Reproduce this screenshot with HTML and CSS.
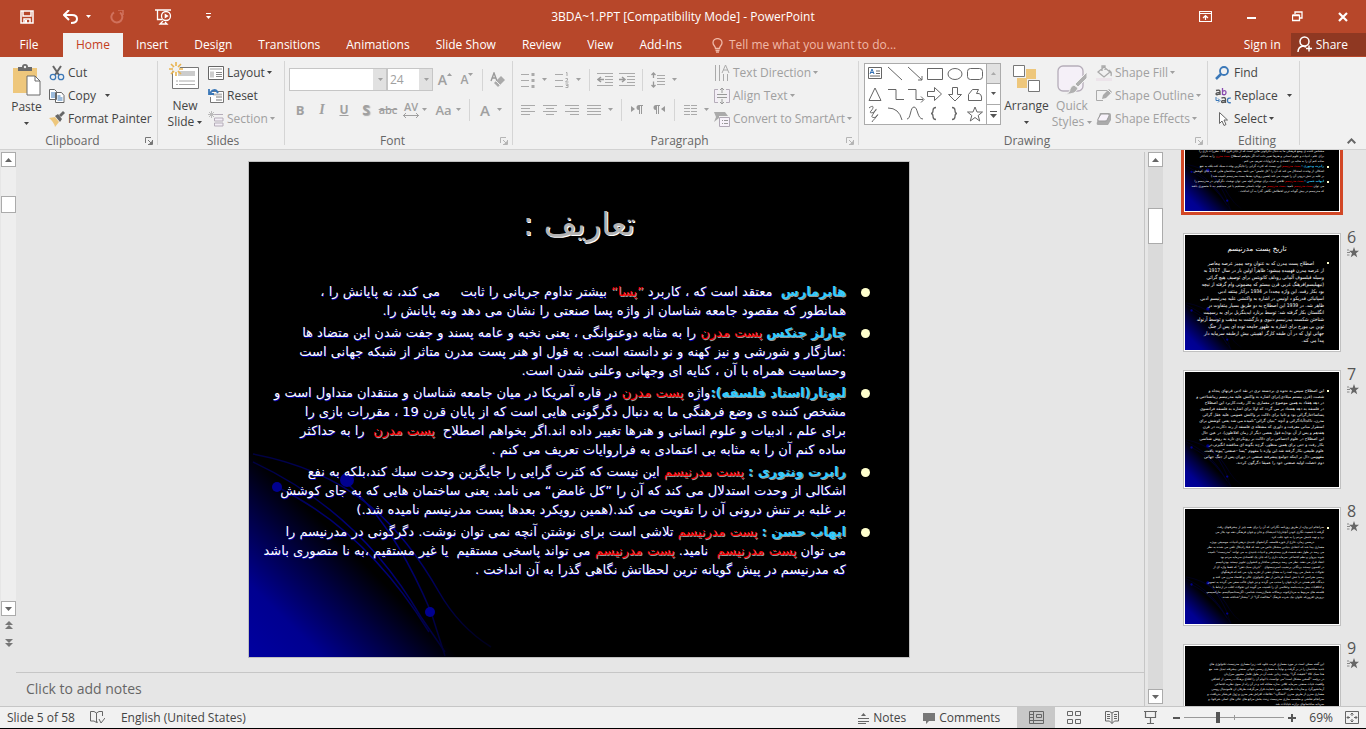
FILE: index.html
```html
<!DOCTYPE html>
<html lang="en">
<head>
<meta charset="utf-8">
<title>3BDA~1.PPT [Compatibility Mode] - PowerPoint</title>
<link rel="stylesheet" href="styles.css">
</head>
<body>
<svg class="defs" aria-hidden="true">
  <defs>
    <linearGradient id="glow" gradientUnits="userSpaceOnUse" x1="0" y1="495" x2="104" y2="390">
      <stop offset="0" stop-color="#0000a0"/><stop offset=".35" stop-color="#000090"/><stop offset=".7" stop-color="#000045"/><stop offset="1" stop-color="#000"/>
    </linearGradient>
    <linearGradient id="trail" gradientUnits="userSpaceOnUse" x1="0" y1="300" x2="240" y2="495">
      <stop offset="0" stop-color="#000040"/><stop offset=".5" stop-color="#000088"/><stop offset="1" stop-color="#000018"/>
    </linearGradient>
    <symbol id="slide-bg" viewBox="0 0 660 495" preserveAspectRatio="none">
      <rect width="660" height="495" fill="#000"/>
      <rect y="230" width="300" height="265" fill="url(#glow)"/>
      <g fill="none" stroke="url(#trail)" stroke-width="1.5">
        <path d="M4 292C100 310 150 360 190 430Q210 465 242 485"/>
        <path d="M4 300C90 340 140 400 172 455L196 490"/>
        <path d="M28 325C90 355 140 405 180 470"/>
        <path d="M99 322C140 360 165 410 182 450L196 494"/>
      </g>
      <g fill="#000090"><circle cx="28" cy="325" r="5"/><circle cx="98" cy="318" r="7"/><circle cx="181" cy="450" r="5"/></g>
    </symbol>
    <symbol id="caret" viewBox="0 0 5 3"><path d="M0 0h5L2.500 3z" fill="currentColor"/></symbol>
    <symbol id="launch" viewBox="0 0 8 8"><path d="M.5 6V.5H6M3 3l3 3M7.500 3v4.500H3" fill="none" stroke="currentColor"/><path d="M7 4v3H4z" fill="currentColor"/></symbol>
    <symbol id="star" viewBox="0 0 12 11"><path d="M7 0l1.300 3.700H12L9 6.200l1.200 4L7 8 3.800 10.200 5 6.200 2 3.700h3.700z" fill="#666"/><path d="M0 3h2M0 5.500h3M0 8h2.500" stroke="#888"/></symbol>
    <symbol id="up" viewBox="0 0 7 4"><path d="M0 4h7L3.500 0z" fill="currentColor"/></symbol>
    <symbol id="down" viewBox="0 0 7 4"><path d="M0 0h7L3.500 4z" fill="currentColor"/></symbol>
  </defs>
</svg>

<div class="app">
<header class="titlebar">
  <div class="quick">
    <button class="qb save" aria-label="Save"><svg width="14" height="14" viewBox="0 0 14 14"><path d="M1 1h12v12H1zM3 1v5h8V1M4 13V9h6v4" fill="none" stroke="#fff" stroke-width="1.500"/><path d="M5 10h2v3H5z" fill="#fff"/></svg></button>
    <button class="qb undo" aria-label="Undo"><svg width="15" height="14" viewBox="0 0 15 14"><path d="M2 5h7q5 0 5 4t-6 4" fill="none" stroke="#fff" stroke-width="2"/><path d="M6 0L1 5l5 5" fill="none" stroke="#fff" stroke-width="2"/></svg><svg class="c"><use href="#caret"/></svg></button>
    <button class="qb redo" aria-label="Repeat"><svg width="14" height="14" viewBox="0 0 14 14"><path d="M10 2.500A5.500 5.500 0 1 1 4 2.300" fill="none" stroke="#d0715c" stroke-width="2"/><path d="M8 0h5v5" fill="none" stroke="#d0715c" stroke-width="1.500"/></svg></button>
    <button class="qb show" aria-label="Start from beginning"><svg width="17" height="16" viewBox="0 0 17 16"><path d="M0 1h16M2.500 1v9.500H7M8 12l-3 3h7l-2-2" fill="none" stroke="#fff" stroke-width="1.300"/><circle cx="11" cy="7" r="4.500" fill="#b7472a" stroke="#fff" stroke-width="1.300"/><path d="M9.700 4.500v5l4-2.500z" fill="#fff"/></svg></button>
    <button class="qb more" aria-label="Customize Quick Access Toolbar"><svg width="7" height="7" viewBox="0 0 7 7"><path d="M1 .5h5" stroke="#fff"/><path d="M1 3h5L3.500 6z" fill="#fff"/></svg></button>
  </div>
  <h1 class="doc">3BDA~1.PPT [Compatibility Mode] - PowerPoint</h1>
  <div class="win">
    <button aria-label="Ribbon Display Options"><svg width="13" height="11" viewBox="0 0 13 11"><path d="M.5.500h12v10H.500zM.500 2.500h12M6.500 9V4.500M4 7l2.500-2.500L9 7" fill="none" stroke="#fff" stroke-width="1.200"/></svg></button>
    <button aria-label="Minimize"><svg width="10" height="11" viewBox="0 0 10 11"><path d="M0 7h9" stroke="#fff" stroke-width="2"/></svg></button>
    <button aria-label="Restore Down"><svg width="11" height="11" viewBox="0 0 11 11"><path d="M.5 4.500h7v5h-7zM.500 4h7M3 3V1h7v6H8" fill="none" stroke="#fff" stroke-width="1.300"/></svg></button>
    <button aria-label="Close"><svg width="10" height="10" viewBox="0 0 10 10"><path d="M1 1l8 8M9 1L1 9" stroke="#fff" stroke-width="2.200"/></svg></button>
  </div>
</header>

<nav class="tabs">
  <button class="tab file">File</button><button class="tab on">Home</button><button class="tab">Insert</button><button class="tab">Design</button><button class="tab">Transitions</button><button class="tab">Animations</button><button class="tab">Slide Show</button><button class="tab">Review</button><button class="tab">View</button><button class="tab">Add-Ins</button>
  <button class="tell"><svg width="11" height="15" viewBox="0 0 11 15"><path d="M3.500 10.500C3.500 8 1 7.500 1 4.800a4.500 4.200 0 0 1 9 0c0 2.700-2.500 3.200-2.500 5.700zM3.500 12.500h4M4 14.200h3" fill="none" stroke="#f0b9a8" stroke-width="1.300"/></svg>Tell me what you want to do...</button>
  <button class="sign">Sign in</button>
  <button class="share"><svg width="16" height="17" viewBox="0 0 16 17"><circle cx="7.500" cy="5.500" r="4.500" fill="none" stroke="#fff" stroke-width="1.500"/><path d="M1 16q0-5 5-6l3 1M12 9.500v6M9 12.500h6" fill="none" stroke="#fff" stroke-width="1.500"/></svg>Share</button>
</nav>

<section class="ribbon">
  <div class="group clip">
    <div class="tools">
      <button class="big paste"><svg width="30" height="32" viewBox="0 0 30 32"><path d="M1 4h24v25H1z" fill="#eec77c"/><path d="M6 7V3h4a3 3 0 0 1 6 0h4v4z" fill="#6a6a6a"/><circle cx="13" cy="3" r="1.200" fill="#f1f1f1"/><path d="M15 12h8l5 5v14H15z" fill="#fff" stroke="#6a6a6a"/><path d="M23 12v5h5" fill="none" stroke="#6a6a6a"/></svg><span>Paste</span><svg class="c"><use href="#caret"/></svg></button>
      <div class="rows">
        <button class="row"><svg width="16" height="16" viewBox="0 0 16 16"><path d="M4 1l6 9M12 1L6 10" stroke="#666" stroke-width="2"/><circle cx="4" cy="12" r="2.700" fill="none" stroke="#3b78b8" stroke-width="1.300"/><circle cx="12" cy="12" r="2.700" fill="none" stroke="#3b78b8" stroke-width="1.300"/></svg>Cut</button>
        <button class="row copy"><svg width="16" height="16" viewBox="0 0 16 16"><path d="M.5 1.500h5l2 2v8h-7zM6.500 4.500h6l2.500 3v7H6.500z" fill="#fff" stroke="#666"/><path d="M2 5h4M2 7h4M2 9h4M8.500 8h3M8.500 10h5M8.500 12h5" stroke="#3b78b8"/></svg>Copy<svg class="c"><use href="#caret"/></svg></button>
        <button class="row"><svg width="16" height="16" viewBox="0 0 16 16"><path d="M0 7l6-1 4 5-4 5q-1-5-6-9z" fill="#eec77c"/><path d="M6 5l3-2 4 5-2 3zM10 4l4-4 2 2-4 4z" fill="#666"/></svg>Format Painter</button>
      </div>
    </div>
    <div class="name">Clipboard</div><button class="launch" aria-label="Clipboard options"><svg><use href="#launch"/></svg></button>
  </div>

  <div class="group slides">
    <div class="tools">
      <button class="big new"><svg width="32" height="30" viewBox="0 0 32 30"><path d="M3.500 5.500h26v21h-26z" fill="#fff" stroke="#777"/><path d="M9 9h17v5H9z" fill="#ccc"/><path d="M7 19h19M7 22.500h19" stroke="#aaa" stroke-dasharray="2 1 30"/><circle cx="7" cy="7" r="4" fill="#f1f1f1"/><path d="M7 0v4M7 10v4M0 7h4M10 7h4M2 2l3 3M9 9l3 3M12 2L9 5M5 9l-3 3" stroke="#e9b44f" stroke-width="1.600"/></svg><span>New</span><span>Slide <svg class="c"><use href="#caret"/></svg></span></button>
      <div class="rows">
        <button class="row"><svg width="16" height="16" viewBox="0 0 16 16"><path d="M.5 1.500h15v13H.500z" fill="#fff" stroke="#666"/><path d="M2 3h12v2H2zM2 6.500h4v6H2z" fill="#ccc"/><path d="M8 7.500h6M8 9.500h6M8 11.500h6" stroke="#888"/></svg>Layout<svg class="c"><use href="#caret"/></svg></button>
        <button class="row"><svg width="16" height="16" viewBox="0 0 16 16"><path d="M4 3.500h11.500v11H2.500V9" fill="#fff" stroke="#777"/><path d="M5 6.500h9M8 9h6M8 12h6" stroke="#bbb" stroke-width="2"/><path d="M10 5Q7-1 2 5M1 1v5h5" fill="none" stroke="#3b78b8" stroke-width="1.800"/></svg>Reset</button>
        <button class="row off"><svg width="16" height="16" viewBox="0 0 16 16"><path d="M6 3.500h9M6.500 7h8.500v3H6.500zM6.500 12h8.500v3H6.500z" fill="#f3eef6" stroke="#b5adb9"/><path d="M3.500 0v7M0 3.500h7M1 1l5 5M6 1L1 6" stroke="#bbb"/></svg>Section<svg class="c"><use href="#caret"/></svg></button>
      </div>
    </div>
    <div class="name">Slides</div>
  </div>

  <div class="group font">
    <div class="tools stack off">
      <div class="line">
        <label class="combo face"><select aria-label="Font"><option></option></select><svg class="c"><use href="#caret"/></svg></label><label class="combo size"><select aria-label="Font size"><option>24</option></select><svg class="c"><use href="#caret"/></svg></label>
        <button class="t grow" aria-label="Increase font size">A<svg class="c"><use href="#up"/></svg></button>
        <button class="t shrink" aria-label="Decrease font size">A<svg class="c"><use href="#down"/></svg></button>
        <i class="sep"></i>
        <button class="t" aria-label="Clear formatting"><svg width="16" height="16" viewBox="0 0 16 16"><path d="M1 9L4 1l3 8M2 6h4" fill="none" stroke="#999" stroke-width="1.400"/><path d="M4 11l7-7 4 4-7 7z" fill="#aaa"/><path d="M6 9l4 4" stroke="#f1f1f1"/></svg></button>
      </div>
      <div class="line">
        <button class="t b">B</button><button class="t i">I</button><button class="t u">U</button><button class="t s">S</button><button class="t strike">abc</button>
        <button class="t w av" aria-label="Character spacing"><span>AV<svg width="16" height="5" viewBox="0 0 16 5"><path d="M0 2.500h16M3 0L.5 2.500 3 5M13 0l2.500 2.500L13 5" fill="none" stroke="currentColor"/></svg></span><svg class="c"><use href="#caret"/></svg></button>
        <button class="t w aa">Aa<svg class="c"><use href="#caret"/></svg></button>
        <i class="sep"></i>
        <button class="t w col">A<svg class="c"><use href="#caret"/></svg></button>
      </div>
    </div>
    <div class="name">Font</div><button class="launch off" aria-label="Font options"><svg><use href="#launch"/></svg></button>
  </div>

  <div class="group para">
    <div class="tools off">
      <div class="stack">
        <div class="line">
          <button class="t w" aria-label="Bullets"><svg width="14" height="16" viewBox="0 0 14 16"><path d="M0 2.500h8M0 8.500h8M0 14.500h8" stroke="#aaa"/><path d="M10.500 1h3v3h-3zM10.500 7h3v3h-3zM10.500 13h3v3h-3z" fill="#aaa"/></svg><svg class="c"><use href="#caret"/></svg></button>
          <button class="t w" aria-label="Numbering"><svg width="14" height="16" viewBox="0 0 14 16"><path d="M0 2.500h8M0 8.500h8M0 14.500h8M11 .5h1V4M10.500 6.500h2v1.500l-2 2h3M10.500 12h2.500v3.500h-2.500M11 13.500h2" fill="none" stroke="#aaa"/></svg><svg class="c"><use href="#caret"/></svg></button>
          <i class="sep"></i>
          <button class="t" aria-label="Decrease list level"><svg width="16" height="13" viewBox="0 0 16 13"><path d="M0 .5h16M8 3.500h8M8 6.500h8M8 9.500h8M0 12.500h16" stroke="#aaa"/><path d="M7 6.500H1M4 4L1 6.500 4 9" fill="none" stroke="#999" stroke-width="1.500"/></svg></button>
          <button class="t" aria-label="Increase list level"><svg width="16" height="13" viewBox="0 0 16 13"><path d="M0 .5h16M8 3.500h8M8 6.500h8M8 9.500h8M0 12.500h16" stroke="#aaa"/><path d="M0 6.500h6M3 4l3 2.500L3 9" fill="none" stroke="#999" stroke-width="1.500"/></svg></button>
          <i class="sep"></i>
          <button class="t w" aria-label="Line spacing"><svg width="14" height="16" viewBox="0 0 14 16"><path d="M6 3.500h8M6 6.500h8M6 9.500h8M6 12.500h8" stroke="#aaa"/><path d="M2.500 1v5M.5 3l2-2 2 2M2.500 9.500v5M.5 13l2 2 2-2" fill="none" stroke="#999" stroke-width="1.300"/></svg><svg class="c"><use href="#caret"/></svg></button>
        </div>
        <div class="line">
          <button class="t" aria-label="Align left"><svg width="14" height="10" viewBox="0 0 14 10"><path d="M0 .5h14M0 3.500h9M0 6.500h14M0 9.500h9" stroke="#aaa"/></svg></button>
          <button class="t" aria-label="Center"><svg width="14" height="10" viewBox="0 0 14 10"><path d="M0 .5h14M3 3.500h8M0 6.500h14M3 9.500h8" stroke="#aaa"/></svg></button>
          <button class="t" aria-label="Align right"><svg width="14" height="10" viewBox="0 0 14 10"><path d="M0 .5h14M5 3.500h9M0 6.500h14M5 9.500h9" stroke="#aaa"/></svg></button>
          <button class="t w" aria-label="Justify"><svg width="14" height="10" viewBox="0 0 14 10"><path d="M0 .5h14M0 3.500h14M0 6.500h14M0 9.500h14" stroke="#aaa"/></svg><svg class="c"><use href="#caret"/></svg></button>
          <i class="sep"></i>
          <button class="t" aria-label="Left-to-right"><svg width="12" height="9" viewBox="0 0 12 9"><path d="M0 1v6l4-3zM8 0h4v1H8v4a2.500 2.500 0 0 1 0-5z" fill="#999"/><path d="M8.500 0v9M10.500 0v9" stroke="#999"/></svg></button>
          <button class="t" aria-label="Right-to-left"><svg width="12" height="9" viewBox="0 0 12 9"><path d="M12 1v6L8 4zM3 0h4v1H3v4a2.500 2.500 0 0 1 0-5z" fill="#999"/><path d="M3.500 0v9M5.500 0v9" stroke="#999"/></svg></button>
          <i class="sep"></i>
          <button class="t w" aria-label="Columns"><svg width="13" height="10" viewBox="0 0 13 10"><path d="M0 .5h6M7 .5h6M0 3.500h6M7 3.500h6M0 6.500h6M7 6.500h6M0 9.500h6M7 9.500h6" stroke="#aaa"/></svg><svg class="c"><use href="#caret"/></svg></button>
        </div>
      </div>
      <div class="rows">
        <button class="row"><svg width="16" height="16" viewBox="0 0 16 16"><path d="M1.500 0v16M5.500 0v16M9.500 9v7M13.500 9v7M8 8l3.500-8L15 8M9 5h5" fill="none" stroke="#aaa"/></svg>Text Direction<svg class="c"><use href="#caret"/></svg></button>
        <button class="row"><svg width="16" height="16" viewBox="0 0 16 16"><path d="M4 1.500H.500v13H4M12 1.500h3.500v13H12" fill="#f3eef6" stroke="#b5adb9"/><path d="M3 6.500h10M3 9.500h10M8 0v5M6 2l2-2 2 2M8 11v5M6 14l2 2 2-2" fill="none" stroke="#999"/></svg>Align Text<svg class="c"><use href="#caret"/></svg></button>
        <button class="row"><svg width="16" height="16" viewBox="0 0 16 16"><path d="M0 1h11l3 4H5v2l-5 4 2-5z" fill="#aaa"/><path d="M5.500 6.500h10v9h-10z" fill="#f7f2fa" stroke="#b0a8b5"/><path d="M8 9.500h1M10 9.500h4M8 12.500h1M10 12.500h4" stroke="#999"/></svg>Convert to SmartArt<svg class="c"><use href="#caret"/></svg></button>
      </div>
    </div>
    <div class="name">Paragraph</div><button class="launch off" aria-label="Paragraph options"><svg><use href="#launch"/></svg></button>
  </div>

  <div class="group draw">
    <div class="tools">
      <div class="gallery">
        <svg class="shapes" width="121" height="60" viewBox="0 0 121 60" role="img" aria-label="Shapes"><g fill="none" stroke="#666"><path d="M3.500 3.500h13v11h-13zM11 7h4M11 9.500h4M5 12h10"/><path d="M5 10l2-5 2 5M5.500 8.500h3" stroke="#2f6fb5"/><path d="M23 3l14 13M43 3l14 13M57 12v4h-4M62.500 4.500h15v11h-15z"/><ellipse cx="90" cy="10" rx="7" ry="5.500"/><rect x="102.500" y="4.500" width="15" height="11" rx="3"/><path d="M10 24l6 12.500H4zM23 25.500h8v10h8M43 25.500h8v10h7M56 32.500l3 3-3 3M62.500 27.500h7v-4l7 6.500-7 6.500v-4h-7zM87.500 23.500h5v7h4L90 37l-6.500-6.500h4zM103.500 36.500v-6l4-5h6l-2 4q6-1 5 7zM4 44c5-4 5 0 2 3s4 2 5-1-3 4-4 6 4 2 5 0 1-2-1 1-3 3-4 5M23 44q11 0 14 12M42 55c4 0 3-12 7-12s3 12 9 12"/><path d="M71 43.500q-3 0-3 3t-2 3q2 0 2 3t3 3M87 43.500q3 0 3 3t2 3q-2 0-2 3t-3 3" stroke-width="1.300"/><path d="M110 43l2 5h5.500l-4.300 3.500 1.500 5.500-4.700-3.500-4.700 3.500 1.500-5.500L102.500 48h5.500z"/></g></svg>
        <div class="gscroll"><button class="dis" aria-label="Scroll up"><svg class="c"><use href="#up"/></svg></button><button aria-label="Scroll down"><svg class="c"><use href="#caret"/></svg></button><button aria-label="More shapes"><svg width="7" height="7" viewBox="0 0 7 7"><path d="M0 .5h7" stroke="#555"/><path d="M0 3h7L3.500 7z" fill="#555"/></svg></button></div>
      </div>
      <button class="big arr"><svg width="28" height="28" viewBox="0 0 28 28"><path d="M13 4h10v10H13zM4 13h10v10H4z" fill="#eec77c"/><path d="M.5.500h11v11H.500zM15.500 15.500h11v11h-11z" fill="#fff" stroke="#777"/></svg><span>Arrange</span><svg class="c"><use href="#caret"/></svg></button>
      <button class="big qs off"><svg width="30" height="30" viewBox="0 0 30 30"><rect x="1" y="1" width="25" height="25" rx="5" fill="#f5f0f8" stroke="#b5adb9" stroke-width="1.300"/><path d="M30 7v6l-9 9-3-3zM17 20l4 3q-2 7-13 6 5-1 5-5 1-3 4-4z" fill="#b0b0b0" stroke="#f1f1f1"/></svg><span>Quick</span><span>Styles <svg class="c"><use href="#caret"/></svg></span></button>
      <div class="rows off">
        <button class="row"><svg width="16" height="16" viewBox="0 0 16 16"><path d="M2 7l6-5 6 5-6 5zM6 6V1h3v4M13 5q3 2 2 6" fill="none" stroke="#aaa" stroke-width="1.300"/><path d="M0 13h16v3H0z" fill="#ece4ea"/></svg>Shape Fill<svg class="c"><use href="#caret"/></svg></button>
        <button class="row"><svg width="16" height="16" viewBox="0 0 16 16"><path d="M11 2.500H.500v10H7" fill="none" stroke="#aaa"/><path d="M6 11l1-4 6-6 3 3-6 6z" fill="#aaa"/><path d="M12 2l3 3" stroke="#f1f1f1"/></svg>Shape Outline<svg class="c"><use href="#caret"/></svg></button>
        <button class="row"><svg width="16" height="16" viewBox="0 0 16 16"><path d="M4 2h9q2 0 2 2v5l-3 5H2q-2 0-1-3z" fill="#aaa"/><path d="M5 3h7q2 0 1 2l-2 4q0 1-2 1H3q-2 0-1-2z" fill="#f7f2fa" stroke="#999"/></svg>Shape Effects<svg class="c"><use href="#caret"/></svg></button>
      </div>
    </div>
    <div class="name">Drawing</div><button class="launch off" aria-label="Drawing options"><svg><use href="#launch"/></svg></button>
  </div>

  <div class="group edit">
    <div class="tools"><div class="rows">
      <button class="row"><svg width="16" height="16" viewBox="0 0 16 16"><circle cx="9" cy="6" r="4" fill="none" stroke="#3b78b8" stroke-width="1.800"/><path d="M6 9l-5 5" stroke="#3b78b8" stroke-width="2.500"/></svg>Find</button>
      <button class="row repl"><svg width="16" height="16" viewBox="0 0 16 16" fill="none" stroke-width="1.300"><path d="M1 2.500q4-1 4 1V7M5 4.500q-4 0-4 1.500t4 0" stroke="#555"/><path d="M7.500 0v7M7.500 3.500Q11 1.500 11 4.500T7.500 6.500" stroke="#8a4bb0"/><path d="M1 9v3.500h3M3 10.500l2 2-2 2" stroke="#3b78b8" stroke-width="1"/><path d="M6.500 10q4-1 4 1v4M10.500 12.300q-4 0-4 1.500t4 0" stroke="#555"/><path d="M15.800 10.200q-3.300-.8-3.300 2.200t3.300 2.200" stroke="#3b78b8"/></svg>Replace<svg class="c"><use href="#caret"/></svg></button>
      <button class="row"><svg width="16" height="16" viewBox="0 0 16 16"><path d="M4.500 1.500v11l2.500-2.500 2 4.500 2-1-2-4.500h3.500z" fill="#fff" stroke="#666"/></svg>Select<svg class="c"><use href="#caret"/></svg></button>
    </div></div>
    <div class="name">Editing</div>
  </div>
  <button class="collapse" aria-label="Collapse the Ribbon"><svg width="9" height="6" viewBox="0 0 9 6"><path d="M.7 5.200l3.800-3.800 3.800 3.800" fill="none" stroke="#666" stroke-width="2"/></svg></button>
</section>

<main class="work">
  <div class="vscroll left">
    <button class="sb" aria-label="Up"><svg><use href="#up"/></svg></button>
    <div class="track t1"><span class="thumb"></span></div>
    <button class="sb" aria-label="Down"><svg><use href="#down"/></svg></button>
    <button class="jump" aria-label="Previous slide"><svg width="8" height="8" viewBox="0 0 8 8"><path d="M0 4l4-4 4 4zM0 8l4-4 4 4z" fill="#777"/></svg></button>
    <button class="jump" aria-label="Next slide"><svg width="8" height="8" viewBox="0 0 8 8"><path d="M0 0l4 4 4-4zM0 4l4 4 4-4z" fill="#777"/></svg></button>
  </div>
  <div class="editor">
    <div class="stage">
      <article class="slide" lang="fa" dir="rtl">
        <svg class="bg" aria-hidden="true"><use href="#slide-bg"/></svg>
        <h2>تعاریف :</h2>
        <ul>
          <li><span><b>هابرمارس</b>&nbsp; معتقد است که ، کاربرد <em>”پسا“</em> بیشتر تداوم جریانی را ثابت &nbsp; &nbsp; می کند، نه پایانش را ،</span><span>همانطور که مقصود جامعه شناسان از واژه پسا صنعتی را نشان می دهد ونه پایانش را.</span></li>
          <li><span><b>چارلز جنکس</b> <em>پست مدرن</em> را به مثابه دوعنوانگی ، یعنی نخبه و عامه پسند و جفت شدن این متضاد ها</span><span>:سازگار و شورشی و نیز کهنه و نو دانسته است. به قول او هنر پست مدرن متاثر از شبکه جهانی است</span><span>وحساسیت همراه با آن ، کنایه ای وجهانی وعلنی شدن است.</span></li>
          <li><span><b>لیوتار(استاد فلسفه):</b>واژه <em>پست مدرن</em> در قاره آمریکا در میان جامعه شناسان و منتقدان متداول است و</span><span>مشخص کننده ی وضع فرهنگی ما به دنبال دگرگونی هایی است که از پایان قرن 19 ، مقررات بازی را</span><span>برای علم ، ادبیات و علوم انسانی و هنرها تغییر داده اند.اگر بخواهم اصطلاح&nbsp; <em>پست مدرن</em>&nbsp; را به حداکثر</span><span>ساده کنم آن را به مثابه بی اعتمادی به فراروایات تعریف می کنم .</span></li>
          <li><span><b>رابرت ونتوری :</b> <em>پست مدرنیسم</em> این نیست که کثرت گرایی را جایگزین وحدت سبك کند،بلکه به نفع</span><span>اشکالی از وحدت استدلال می کند که آن را ”کل غامض“ می نامد. یعنی ساختمان هایی که به جای کوشش</span><span>بر غلبه بر تنش درونی آن را تقویت می کند.(همین رویکرد بعدها پست مدرنیسم نامیده شد.)</span></li>
          <li><span><b>ایهاب حسن :</b> <em>پست مدرنیسم</em> تلاشی است برای نوشتن آنچه نمی توان نوشت. دگرگونی در مدرنیسم را</span><span>می توان <em>پست مدرنیسم</em>&nbsp; نامید. <em>پست مدرنیسم</em> می تواند پاسخی مستقیم&nbsp; یا غیر مستقیم ،به نا متصوری باشد</span><span>که مدرنیسم در پیش گویانه ترین لحظاتش نگاهی گذرا به آن انداخت .</span></li>
        </ul>
      </article>
    </div>
    <div class="notes" role="textbox" aria-label="Notes">Click to add notes</div>
  </div>
  <div class="vscroll right">
    <button class="sb" aria-label="Up"><svg><use href="#up"/></svg></button>
    <div class="track t2"><span class="thumb"></span></div>
    <button class="sb" aria-label="Down"><svg><use href="#down"/></svg></button>
  </div>
  <aside class="thumbs">
    <div class="item cut"><div class="mini sel m5" lang="fa" dir="rtl"><svg class="bg" aria-hidden="true"><use href="#slide-bg"/></svg>
      <p><span class="dot"></span><span><b>لیوتار(استاد فلسفه):</b>واژه <em>پست مدرن</em> در قاره آمریکا در میان جامعه شناسان و منتقدان متداول است و</span><span>مشخص کننده ی وضع فرهنگی ما به دنبال دگرگونی هایی است که از پایان قرن 19 ، مقررات بازی را</span><span>برای علم ، ادبیات و علوم انسانی و هنرها تغییر داده اند.اگر بخواهم اصطلاح <em>پست مدرن</em> را به حداکثر</span><span>ساده کنم آن را به مثابه بی اعتمادی به فراروایات تعریف می کنم .</span></p>
      <p><span class="dot"></span><span><b>رابرت ونتوری :</b> <em>پست مدرنیسم</em> این نیست که کثرت گرایی را جایگزین وحدت سبك کند،بلکه به نفع</span><span>اشکالی از وحدت استدلال می کند که آن را ”کل غامض“ می نامد. یعنی ساختمان هایی که به جای کوشش</span><span>بر غلبه بر تنش درونی آن را تقویت می کند.(همین رویکرد بعدها پست مدرنیسم نامیده شد.)</span></p>
      <p><span class="dot"></span><span><b>ایهاب حسن :</b> <em>پست مدرنیسم</em> تلاشی است برای نوشتن آنچه نمی توان نوشت. دگرگونی در مدرنیسم را</span><span>می توان <em>پست مدرنیسم</em> نامید. <em>پست مدرنیسم</em> می تواند پاسخی مستقیم یا غیر مستقیم ،به نا متصوری باشد</span><span>که مدرنیسم در پیش گویانه ترین لحظاتش نگاهی گذرا به آن انداخت .</span></p>
    </div></div>
    <div class="item"><div class="mini m6" lang="fa" dir="rtl"><svg class="bg" aria-hidden="true"><use href="#slide-bg"/></svg>
      <h3>تاریخ پست مدرنیسم</h3>
      <p><span class="dot"></span><span class="in">اصطلاح پست مدرن که به عنوان وجه ممیز عرصه معاصر</span><span>از عرصه مدرن فهمیده میشود؛ ظاهراً اولین بار در سال 1917 به</span><span>وسیله فیلسوف آلمانی رودلف کانویتس برای توصیف هیچ گرائی</span><span>(نیهیلیسم)فرهنگ غربی قرن بیستم که مضمونی وام گرفته از نیچه</span><span>بود بکار رفت. این واژه مجددا در 1934 درآثار منتقد ادبی</span><span>اسپانیائی فدریکو د اونیس در اشاره به واکنشی علیه مدرنیسم ادبی</span><span>ظاهر شد. در 1939 این اصطلاح به دو طریق بسیار متفاوت در</span><span>انگلستان بکار گرفته شد: توسط برنارد ایدینگزبل برای به رسمیت</span><span>شناختن شکست مدرنیسم دنیوی و بازگشت به مذهب و توسط آرنولد</span><span>توین بی مورخ برای اشاره به ظهور جامعه توده ای پس از جنگ</span><span>جهانی اول که در آن طبقه کارگر اهمیتی بیش ازطبقه سرمایه دار</span><span class="end">پیدا می کند.</span></p>
    </div><div class="no">6<svg><use href="#star"/></svg></div></div>
    <div class="item"><div class="mini m7" lang="fa" dir="rtl"><svg class="bg" aria-hidden="true"><use href="#slide-bg"/></svg>
      <p><span class="dot"></span><span>این اصطلاح سپس به نحوه ی برجسته تری در نقد ادبی قرنهای پنجاه و</span><span>شصت (قرن بیستم میلادی)برای اشاره به واکنش علیه مدرنیسم زیباشناختی و</span><span>در دهه هفتاد به همین موضوع در معماری به کار رفت.کاربرد این اصطلاح</span><span>در فلسفه به دهه هشتاد بر می گردد که اولا برای اشاره به فلسفه فرانسوی</span><span>پساساختارگرائی بود و ثانیا برای دلالت بر واکنش عمومی علیه عقل گرائی</span><span>مدرن، ناکجاآبادگرائی و آنچه ”بنیان گرائی“نامیده می شد یعنی کوشش برای</span><span>استقرار مبانی معرفت و داوری که مشغله ی فلسفه از رنه دکارت در قرن</span><span>هفدهم و پس از آن بود(به قول بعضی دیگر از زمان افلاطون). در عین حال</span><span>این اصطلاح در علوم اجتماعی برای دلالت بر رویکردی تازه به روش شناسی</span><span>بکار رفت و حتی برای همین منظور، گرچه بگونه ای مناقشه انگیزتر،در</span><span>علوم طبیعی بکار گرفته شد.این واژه با مفهوم ”پسا –صنعتی“پیوند یافت،</span><span>مفهومی دال بر اینکه جوامع پیشرفته صنعتی در دوران پس از جنگ جهانی</span><span>دوم خصلت اولیه صنعتی خود را عمیقا دگرگون کردند.</span></p>
    </div><div class="no">7<svg><use href="#star"/></svg></div></div>
    <div class="item"><div class="mini m8" lang="fa" dir="rtl"><svg class="bg" aria-hidden="true"><use href="#slide-bg"/></svg>
      <p><span class="dot"></span><span>سرانجام این واژه از طریق روزنامه نگارانی که آن را برای همه چیز از پیشرفتهای رقت</span><span>گرفته تا جمعیت نگاری کودن آنچنان(با اندیشناک و جان و جوان فرهنگی دهه نود بکار می</span><span>برد و تهیه جنبش مردم را به خود جلب کرد.</span><span class="in">درضمن زمان، خارج از حوزه فلسفه، گرانشهای جدیدی درهنر،ادبیات، موسیقی بویژه</span><span>معماری پیدا شد که انتقادی بنیادین مشکل خاص می شد که قبلا رادیکال تلقی می شدند.به نظر</span><span>می رسد در طول دهه شصت قرن بیستم،هنر و ادبیات جدیدی به می توانند ”مدرنیست“ نامیده</span><span>شوند پیروان و نظم اجتماعی سرمایه داری را که جان یک اقتصادی سرمایه مردم بود</span><span>انتقاد قرار می دهند. نظر می رسد پرسشی ساختار و کنشوارن تجویز نیستند بودزبانیسم</span><span>در افسون نیستند بردگانی برنشیب اسپردیستهای &nbsp; ”جریان سبک ذهن“ که فقط واژه ای از</span><span>تحولات به شمار می روند لغت را به معنای ذهنی از تجربه وارد می کند که فرهنگهای</span><span>رسمی هنراسی که با تنش اسناد فرنتاس از نظر تکنولوژی عالی و اقتصاد مدرن می کنند و</span><span>دیدگاه علم هستی در تازه جهان را مدنب می گردند و نیز جهان غالب سعی می گردند به تصویر</span><span>و اخلاقیات بیش پدیده‌پنامند وعکاسی آن را تلفنیده می گویند این تحولات اغلب در ارتباط با</span><span>فلسفه های مربوط به مردازکنونه پرسالانه شمال‌زیست شناسی، اگزیستانسیالیسم، مارکسیسم،</span><span>پرورش افزون‌که علوان نیک شرده فرهنگ ”مخالفت گرا“ از ”پیشتاز“شناخته شدند.</span></p>
    </div><div class="no">8<svg><use href="#star"/></svg></div></div>
    <div class="item last"><div class="mini m9" lang="fa" dir="rtl"><svg class="bg" aria-hidden="true"><use href="#slide-bg"/></svg>
      <p><span>این گفته ممکن است در مورد معماری غریب جلوه کند، زیرا معماری مدرنیست تکنولوژی های</span><span>جدید ساختمان را در بر گرفت و نهایتاً به معماری رسمی جهانی صنعتی پیشرفته تبدیل شد. مع</span><span>هذا سبک کالا ”حقیقت گرا“ روئیت زدایی شده آن در طول قلمار مشهور سرل‌پان</span><span>در پرچمه ”گمشن مشکل است“می توانست با ابهام آن را اقلناع برهنگاب رسمی از کشافی</span><span>واقعیت حیات صنعتی سرمایه کلانی سازه مقابله کند و در آن راه از سوی نظریه اجتماعی</span><span>آرمانشهرگرا، و مناره‌ات ظرافخانه مورد حمایت قرار می‌گرفت.طرفان ان قامونبنیال روسی</span><span>معماری مدرن از طریق مدرن ”انشاگرد“ دقائقات افراش هنر مدرن و ژول فی‌شکر پدر‌یافت، و</span><span>سرانجام نقلشی و مجسمه سازی مدرنیست زینت بخش مراتع های عالی های اصلی شرکتها، و</span><span>سردابه ساختمانهای برازنه خیابانات شد.</span></p>
    </div><div class="no">9<svg><use href="#star"/></svg></div></div>
  </aside>
</main>

<footer class="status">
  <span class="count">Slide 5 of 58</span>
  <button class="spell" aria-label="Spelling"><svg width="15" height="13" viewBox="0 0 15 13"><path d="M6.500 2v9.500L4 10H.500V.500H4zM6.500 2L9 .5h3.500V5M6.500 11.500L8 11M9 8l2 4 4-5" fill="none" stroke="#666"/></svg></button>
  <button class="lang">English (United States)</button>
  <button class="st notesb"><svg width="11" height="12" viewBox="0 0 11 12"><path d="M3 4h5L5.500 1z" fill="#666"/><path d="M0 6.500h11M0 9.500h11M0 11.500h8" stroke="#666"/></svg>Notes</button>
  <button class="st comm"><svg width="12" height="12" viewBox="0 0 12 12"><path d="M0 1h12v8H6l-3 3V9H0z" fill="#777"/></svg>Comments</button>
  <button class="view on" aria-label="Normal"><svg width="15" height="13" viewBox="0 0 15 13"><path d="M.5.500h14v12H.500zM4.500.500v12M1 3.500h3M1 6.500h3M1 9.500h3M7.500 3.500h5v3h-5zM5 9.500h9" fill="none" stroke="#666"/></svg></button>
  <button class="view" aria-label="Slide Sorter"><svg width="14" height="13" viewBox="0 0 14 13"><path d="M.5.500h5v4h-5zM8.500.500h5v4h-5zM.500 8.500h5v4h-5zM8.500 8.500h5v4h-5z" fill="none" stroke="#666"/></svg></button>
  <button class="view" aria-label="Reading View"><svg width="14" height="13" viewBox="0 0 14 13"><path d="M7 2v10.500L4.500 10H.500V.500h4zM7 2L9.500.500h4V10h-4L7 12.500M2 3.500h3M2 5.500h3M2 7.500h3M9 3.500h3M9 5.500h3M9 7.500h3" fill="none" stroke="#666"/></svg></button>
  <button class="view" aria-label="Slide Show"><svg width="13" height="13" viewBox="0 0 13 13"><path d="M0 .5h13M1.500.500v6h10v-6M6.500 7v5M3 12.500h7" fill="none" stroke="#666" stroke-width="1.200"/></svg></button>
  <button class="zb" aria-label="Zoom out"><svg width="7" height="8" viewBox="0 0 7 8"><path d="M0 4h7" stroke="#555" stroke-width="2"/></svg></button>
  <input class="zoom" type="range" min="0" max="100" value="33" aria-label="Zoom">
  <button class="zb" aria-label="Zoom in"><svg width="8" height="8" viewBox="0 0 8 8"><path d="M0 4h8M4 0v8" stroke="#555" stroke-width="2"/></svg></button>
  <button class="pct">69%</button>
  <button class="fit" aria-label="Fit slide to window"><svg width="14" height="13" viewBox="0 0 14 13"><path d="M.5.500h13v12H.500z" fill="none" stroke="#666"/><path d="M7 2v3M7 8v3M2 6.500h3M9 6.500h3M5.500 3.500L7 2l1.500 1.500M5.500 9.500L7 11l1.500-1.500M3.500 5L2 6.500 3.500 8M10.500 5L12 6.500 10.500 8" fill="none" stroke="#666"/></svg></button>
</footer>
</div>
</body>
</html>
```

FILE: styles.css
```css
* { box-sizing: border-box; }
body { margin: 0; font: 12px/16px "Open Sans", "Noto Sans", sans-serif; color: #444; background: #000; }
button { font: inherit; color: inherit; background: none; border: 0; padding: 0; margin: 0; display: flex; align-items: center; white-space: nowrap; }
.defs { position: absolute; width: 0; height: 0; }
.app { height: 100vh; display: flex; flex-direction: column; border-bottom: 1px solid #000; }
.c { width: 5px; height: 3px; flex: none; overflow: visible; }
.off { color: #a0a0a0; }

/* title bar */
.titlebar { display: grid; grid-template-columns: 1fr auto 1fr; align-items: center; height: 33px; background: #b7472a; color: #fff; }
.quick { display: flex; padding-left: 20px; }
.quick .qb { height: 24px; gap: 8px; }
.quick .undo { margin-left: 29px; }
.quick .redo { margin-left: 19px; }
.quick .show { margin-left: 31px; }
.quick .more { margin-left: 33px; }
.doc { margin: 0; font-size: 12px; font-weight: 400; line-height: 16px; }
.win { display: flex; justify-content: flex-end; padding-right: 18px; gap: 35px; }

/* tabs */
.tabs { display: flex; height: 24px; background: #b7472a; color: #fff; }
.tab { padding: 0 13px; justify-content: center; }
.file { width: 63px; padding-right: 18px; }
.on.tab { background: #f1f1f1; color: #c43e1c; }
.tell { gap: 6px; margin-left: 17px; color: #f0b9a8; }
.sign { margin-left: auto; padding-right: 10px; }
.share { background: #8f3822; padding: 0 18px 0 6px; gap: 3px; height: 23px; }

/* ribbon */
.ribbon { display: flex; height: 93px; background: #f1f1f1; border-bottom: 1px solid #d2d2d2; position: relative; }
.group { position: relative; display: flex; flex-direction: column; justify-content: space-between; margin: 4px 0; padding-left: 4px; border-right: 1px solid #d5d5d5; flex: none; }
.clip { width: 158px; }
.slides { width: 127px; }
.font { width: 228px; }
.para { width: 346px; }
.draw { width: 349px; }
.edit { width: 92px; }
.tools { display: flex; }
.name { text-align: center; color: #666; line-height: 16px; height: 12px; padding-right: 16px; }
.slides .name, .edit .name { padding-right: 0; }
.launch { position: absolute; right: 4px; bottom: 0; color: #777; }
.launch.off { color: #b5b5b5; }
.launch svg { width: 8px; height: 8px; }
.rows { display: flex; flex-direction: column; }
.row { height: 23px; gap: 3px; }
.row > svg:first-child { flex: none; }
.row .c { margin-left: -1px; }
.copy .c, .repl .c { margin-left: 6px; }
.big { flex-direction: column; padding-top: 3px; }
.big span { line-height: 16px; }
.big span .c { vertical-align: 2px; }
.paste { width: 45px; }
.paste span { margin-top: 3px; }
.paste .c { margin-top: 7px; }
.new { width: 46px; padding-top: 1px; }
.new > svg + span { margin-top: 6px; }
.stack { display: flex; flex-direction: column; gap: 7px; padding-top: 7px; }
.line { display: flex; align-items: center; height: 23px; }
.combo { position: relative; display: flex; height: 23px; }
.combo select { appearance: none; width: 100%; height: 23px; border: 1px solid #c6c6c6; border-radius: 0; color: #a0a0a0; font: inherit; padding: 0 2px; background: linear-gradient(#e1e1e1, #e1e1e1) right / 13px 100% no-repeat #fff; }
.combo .c { position: absolute; right: 4px; top: 10px; }
.face { width: 98px; }
.size { width: 46px; }
.t { min-width: 22px; height: 22px; justify-content: center; flex: none; }
.t.w { width: 34px; gap: 7px; }
.sep { width: 1px; height: 22px; background: #d5d5d5; margin: 0 4px; flex: none; }
.grow, .shrink { font-size: 14px; font-weight: 600; }
.grow { margin-left: 1px; }
.shrink { font-size: 12px; }
.grow .c, .shrink .c { align-self: flex-start; margin-top: 4px; }
.b { font-weight: 700; font-size: 13px; }
.i { font: italic 700 14px "Liberation Serif", serif; }
.u { font-weight: 700; text-decoration: underline; }
.s { font-weight: 700; font-size: 14px; text-shadow: 1px 1px 1px #aaa; }
.strike { text-decoration: line-through; font-size: 11px; font-weight: 600; }
.t.av { width: 32px; gap: 3px; }
.av span { display: flex; flex-direction: column; line-height: 12px; font-size: 11px; font-weight: 600; }
.t.aa { width: 34px; gap: 4px; font-size: 13px; font-weight: 600; }
.col { font-size: 15px; font-weight: 600; }
.para .stack { width: 197px; flex: none; }
.gallery { display: flex; height: 62px; margin: 2px 0 0 1px; background: #fff; border: 1px solid #ababab; }
.gscroll { width: 14px; display: flex; flex-direction: column; border-left: 1px solid #ababab; color: #555; }
.gscroll button { flex: 1; justify-content: center; border-bottom: 1px solid #ababab; }
.gscroll button:last-child { border-bottom: 0; }
.gscroll .dis { background: #e1e1e1; color: #aaa; }
.arr { width: 51px; padding-top: 4px; }
.arr span { margin-top: 5px; }
.arr .c { margin-top: 7px; }
.qs { width: 40px; padding-top: 4px; }
.qs > svg + span { margin-top: 3px; }
.draw .rows { margin-left: 4px; }
.edit { padding-left: 7px; }
.collapse { position: absolute; right: 10px; bottom: 5px; }

/* workspace */
.work { flex: 1; min-height: 0; display: flex; background: #e6e6e6; }
.vscroll { width: 16px; padding: 2px 0 2px 1px; display: flex; flex-direction: column; flex: none; }
.sb { width: 15px; height: 15px; background: #fff; border: 1px solid #ababab; justify-content: center; color: #666; flex: none; }
.sb svg { width: 7px; height: 4px; }
.track { flex: 1; background: #dadada; }
.left .track { background: #eee; }
.thumb { display: block; width: 15px; background: #fff; border: 1px solid #ababab; }
.t1 .thumb { height: 17px; margin-top: 29px; }
.t2 .thumb { height: 36px; margin-top: 41px; }
.jump { height: 18px; justify-content: center; }
.left { padding-bottom: 54px; }
.editor { flex: 1; min-width: 0; display: flex; flex-direction: column; border-right: 1px solid #c6c6c6; margin: 2px 2px 0 0; }
.stage { flex: 1; display: flex; justify-content: center; align-items: flex-start; padding: 9px 2px 0 0; overflow: hidden; }
.slide { position: relative; width: 662px; aspect-ratio: 662 / 497; border: 1px solid #c0c0c0; padding: 36px 38px 0; font-family: "DejaVu Sans", sans-serif; color: #fff; overflow: hidden; flex: none; }
.bg { position: absolute; left: 0; top: 0; width: 100%; height: 100%; }
.slide h2 { position: relative; margin: 0; text-align: center; font-size: 32px; line-height: 52px; font-weight: 400; color: #b2b2b2; text-shadow: 1px 1px 0 #fff; }
.slide ul { position: relative; list-style: none; margin: 32px 0 0; padding: 0 25px 0 0; }
.slide li { position: relative; margin-bottom: 3px; font-size: 13px; line-height: 19px; text-shadow: 1px 1px 0 #0000b0; }
.slide li::before { content: ""; position: absolute; right: -24px; top: 6px; width: 9px; height: 9px; border-radius: 50%; background: #ffffcc; }
.slide li span { display: block; white-space: nowrap; }
.slide b, .mini b { color: #33ccff; }
.slide em, .mini em { color: #f00; font-style: normal; }
.slide b, .slide em { text-shadow: 1px 1px 0 #999; }
.notes { height: 34px; border-top: 1px solid #c6c6c6; padding-left: 10px; font-size: 14px; line-height: 31px; color: #666; }

/* thumbnails */
.thumbs { width: 203px; padding-left: 18px; display: flex; flex-direction: column; gap: 18px; overflow: hidden; flex: none; }
.item { display: flex; align-items: flex-start; gap: 6px; flex: none; padding-left: 2px; }
.cut { height: 65px; align-items: flex-end; overflow: hidden; padding-left: 0; }
.mini { position: relative; width: 158px; height: 119px; flex: none; border: 1px solid #c0c0c0; outline: 1px solid #fff; outline-offset: -2px; color: #fff; overflow: hidden; font-family: "DejaVu Sans", sans-serif; padding: 0 16px 0 6px; }
.mini .bg { left: 1px; top: 1px; width: calc(100% - 2px); height: calc(100% - 2px); }
.sel { width: 162px; height: 122px; border: 3px solid #d24726; outline-offset: -4px; }
.mini p { position: relative; margin: 0; }
.mini p span { display: block; white-space: nowrap; }
.mini .dot { position: absolute; right: -5px; top: 2px; width: 2px; height: 2px; background: #ffffcc; }
.mini h3 { position: relative; margin: 9px 0 4px; text-align: center; font-size: 7px; line-height: 13px; font-weight: 400; }
.m5 { display: flex; flex-direction: column; justify-content: flex-end; padding-bottom: 18px; }
.m5 p { font-size: 3px; line-height: 5px; }
.m6 p { font-family: "DejaVu Sans Condensed", "DejaVu Sans", sans-serif; font-size: 5px; line-height: 7px; }
.m7, .m8, .m9 { padding-top: 17px; }
.m7 p { font-size: 4px; line-height: 6px; }
.m8 p, .m9 p { font-size: 3px; line-height: 5px; }
.mini .in { padding-right: 10px; }
.no { font-size: 16px; line-height: 18px; display: flex; flex-direction: column; color: #555; margin-top: -5px; }
.no svg { width: 12px; height: 11px; margin-top: 1px; }

/* status bar */
.status { display: flex; align-items: center; height: 22px; background: #f1f1f1; border-top: 1px solid #c6c6c6; padding: 0 7px; flex: none; }
.spell { margin-left: 15px; }
.lang { margin-left: 16px; }
.st { gap: 4px; }
.notesb { margin-left: auto; }
.comm { margin: 0 17px 0 17px; }
.view { width: 38px; height: 21px; justify-content: center; }
.view.on { background: #c8c8c8; }
.zb { margin: 0 4px; }
.zoom { appearance: none; width: 100px; height: 16px; margin: 0; background: linear-gradient(#999, #999) center / 100% 1px no-repeat, linear-gradient(#999, #999) center / 1px 5px no-repeat; }
.zoom::-webkit-slider-thumb { appearance: none; width: 4px; height: 11px; background: #555; }
.pct { margin-left: 9px; }
.fit { margin-left: 12px; }
```
